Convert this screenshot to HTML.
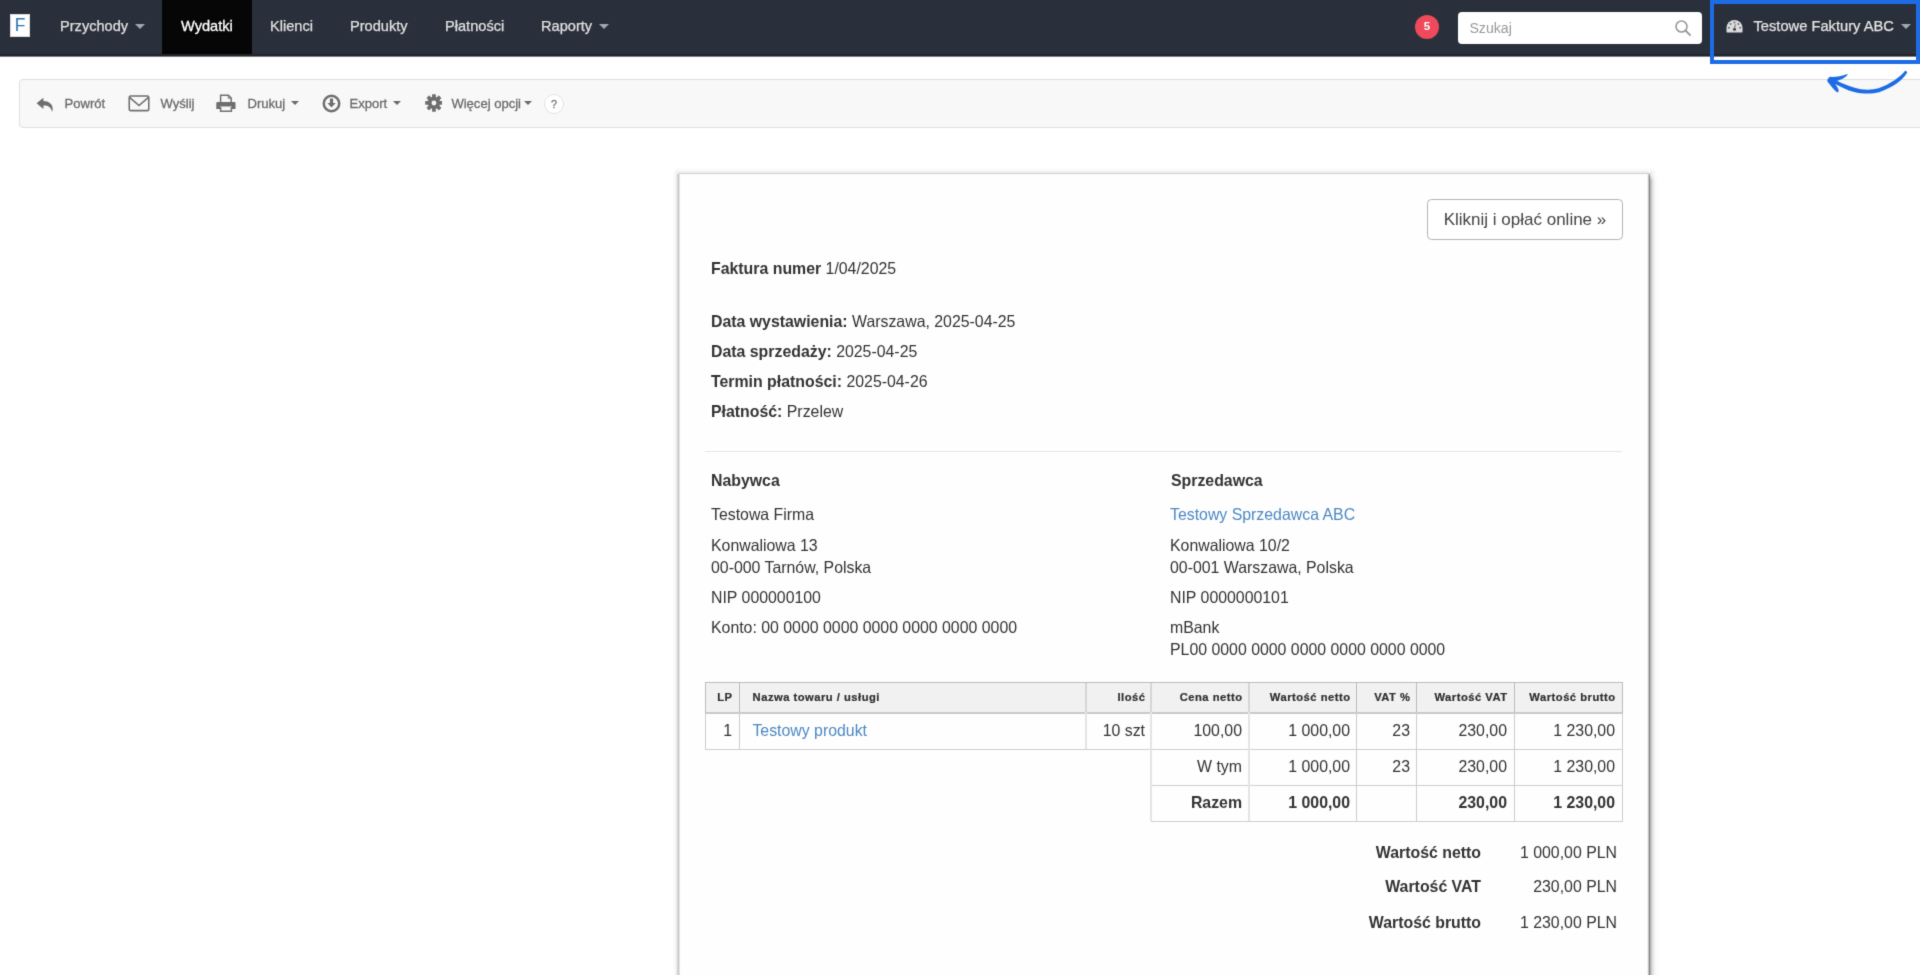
<!DOCTYPE html>
<html lang="pl"><head><meta charset="utf-8"><title>Faktura</title>
<style>
*{box-sizing:border-box;margin:0;padding:0}
html,body{width:1920px;height:975px;overflow:hidden;background:#fff}
body{font-family:"Liberation Sans",sans-serif;color:#333;position:relative;font-size:16px}
#w{position:absolute;left:0;top:0;width:1920px;height:975px;filter:url(#sf)}
.abs{position:absolute;white-space:nowrap}
#nav{left:-6px;top:-6px;width:1932px;height:63px;background:#2a303b;border-bottom:1px solid #7b7e83;box-shadow:inset 0 -2px 0 #212327}
.nv{top:-.4px;height:54px;line-height:52px;color:#e0e0e0;font-size:14.6px;-webkit-text-stroke:.25px #e0e0e0}
.caret{display:inline-block;width:0;height:0;border-left:5px solid transparent;border-right:5px solid transparent;border-top:5px solid #a2a7ae;vertical-align:middle;margin-left:6.8px;margin-top:-1px}
#tb{left:19px;top:79px;width:1920px;height:48.5px;background:#f8f8f8;border:1px solid #dfdfdf;border-radius:4px}
.tbt{top:95.7px;margin-left:.5px;font-size:13.05px;color:#6a6a6a;line-height:15px;-webkit-text-stroke:.3px #6a6a6a}
.tcaret{display:inline-block;width:0;height:0;border-left:4.9px solid transparent;border-right:4.9px solid transparent;border-top:4.9px solid #6a6a6a;vertical-align:middle;margin-left:6px;margin-top:-2px}
#paper{left:678px;top:173px;width:972px;height:830px;background:#fefefe;border:1px solid #d5d5d5;border-left-color:#c8c8c8;border-right-color:#898989}
.t{font-size:15.87px;line-height:18px;color:#333}
.b{font-weight:bold}
a,.lnk{color:#4d88c4;text-decoration:none}
.th{font-size:11.2px;font-weight:bold;color:#2e2e2e;line-height:13px;letter-spacing:.5px;-webkit-text-stroke:.2px #2e2e2e}
.th.r{margin-right:-.5px}
.r{text-align:right}
.vl{width:1px;background:#cdcdcd}
</style></head><body><svg width="0" height="0" style="position:absolute"><filter id="sf" x="0" y="0" width="100%" height="100%" color-interpolation-filters="sRGB"><feConvolveMatrix order="3" kernelMatrix="0.0144 0.0912 0.0144 0.0912 0.5776 0.0912 0.0144 0.0912 0.0144" edgeMode="duplicate" preserveAlpha="false"/></filter></svg><div id="w">
<div id="nav" class="abs"></div>
<div class="abs" style="left:10px;top:14px;width:20px;height:23px;background:#fff;border:1px solid #dcdce6;color:#2d74b8;font-size:17.5px;line-height:21px;text-align:center">F</div>
<div class="abs nv" style="left:60px">Przychody<span class="caret"></span></div>
<div class="abs" style="left:162px;top:-6px;width:90px;height:60px;background:#060606"></div>
<div class="abs nv" style="left:181px;color:#fff;-webkit-text-stroke:.3px #fff">Wydatki</div>
<div class="abs nv" style="left:270px">Klienci</div>
<div class="abs nv" style="left:350px">Produkty</div>
<div class="abs nv" style="left:445px">Płatności</div>
<div class="abs nv" style="left:541px">Raporty<span class="caret"></span></div>

<div class="abs" style="left:1415px;top:15.2px;width:24px;height:24px;border-radius:50%;background:#ee4a5c;color:#fff;font-size:11.5px;font-weight:bold;text-align:center;line-height:23.5px">5</div>
<div class="abs" style="left:1458px;top:12px;width:244px;height:32px;border-radius:4px;background:#fff"></div>
<div class="abs" style="left:1469.4px;top:18.9px;font-size:14.15px;color:#999;line-height:18px">Szukaj</div>
<svg class="abs" style="left:1674px;top:19px" width="18" height="18" viewBox="0 0 18 18"><circle cx="7.5" cy="7.5" r="5.5" fill="none" stroke="#9a9a9a" stroke-width="1.6"/><path d="M11.5 11.5 L16 16" stroke="#9a9a9a" stroke-width="1.8" stroke-linecap="round"/></svg>

<div class="abs nv" style="left:1753.5px;top:0px;color:#e6e6e6;font-size:14.7px">Testowe Faktury ABC<span class="caret" style="margin-left:7px"></span></div>
<svg class="abs" style="left:1726px;top:19px" width="17" height="15" viewBox="0 0 17 15"><path d="M1.2 13.4 Q0.5 13.4 0.5 12.4 V9 A8 8 0 0 1 16.5 9 V12.4 Q16.5 13.4 15.8 13.4 Z" fill="#dcdcdc"/><g fill="#6a6f78"><circle cx="8.5" cy="3.4" r="1"/><circle cx="4.6" cy="5.1" r="1"/><circle cx="12.4" cy="5.1" r="1"/><circle cx="2.9" cy="8.8" r="1"/><circle cx="14.1" cy="8.8" r="1"/></g><circle cx="8.5" cy="10.3" r="1.5" fill="#3a3445"/><path d="M8.3 10 L9.4 5.4" stroke="#6a6470" stroke-width="1"/></svg>
<div class="abs" style="left:1710px;top:-6px;width:216px;height:70px;border:4px solid #1d6ce6;border-top-width:10px;border-right-width:10px;border-bottom-width:4.7px"></div>
<svg class="abs" style="left:1815px;top:62px;z-index:9" width="100" height="40" viewBox="0 0 1920 768"><path fill="#1d6ce6" d="M1745 168 L1772 195 C1700 340 1500 480 1230 580 C1100 615 900 615 750 575 C620 540 480 470 385 420 C420 460 460 520 455 560 L435 585 C380 560 290 440 235 370 C235 330 260 295 300 285 C400 290 520 265 620 228 L628 240 C590 300 500 340 420 362 C520 410 640 460 760 495 C900 540 1080 545 1220 505 C1450 420 1620 300 1722 178 Z"/></svg>

<div id="tb" class="abs"></div>
<svg class="abs" style="left:35.9px;top:97px" width="18.5" height="15.8" viewBox="0 0 18 15"><path d="M7.2 0.6 L0.6 6 L7.2 11.4 L7.2 8 C11.5 7.8 14.6 9.2 15.6 14.4 C17.8 8.2 13.6 3.9 7.2 3.8 Z" fill="#6e6e6e"/></svg>
<svg class="abs" style="left:127.5px;top:95.4px" width="22" height="16.6" viewBox="0 0 22 17"><rect x="1" y="1" width="20" height="15" rx="1.5" fill="none" stroke="#6e6e6e" stroke-width="1.6"/><path d="M1.6 2.6 L11 10.8 L20.4 2.6" fill="none" stroke="#6e6e6e" stroke-width="1.6"/></svg>
<svg class="abs" style="left:216px;top:94px" width="20" height="19" viewBox="0 0 20 19"><path d="M4.6 8.5 V1.2 H12.4 L15.2 4 V8.5" fill="none" stroke="#707070" stroke-width="1.5"/><path d="M12.2 1.4 V4.2 H15" fill="none" stroke="#707070" stroke-width="1"/><path d="M1.6 7.9 H18.2 Q19.5 7.9 19.5 9.2 V15 H16 V12.4 H4 V15 H0.3 V9.2 Q0.3 7.9 1.6 7.9 Z" fill="#6e6e6e"/><path d="M4.6 13 V17.2 H15.4 V13" fill="none" stroke="#707070" stroke-width="1.5"/></svg>
<svg class="abs" style="left:322.2px;top:93.7px" width="19" height="19" viewBox="0 0 19 19"><circle cx="9.5" cy="9.5" r="7.75" fill="none" stroke="#6e6e6e" stroke-width="2.5"/><path d="M7.9 4.6 H11.1 V9 H13.7 L9.5 13.6 L5.3 9 H7.9 Z" fill="#6e6e6e"/></svg>
<svg class="abs" style="left:424.6px;top:94px" width="17.9" height="17.9" viewBox="-9.5 -9.5 19 19"><g fill="#6e6e6e"><circle r="6.6"/><rect x="-2" y="-9.3" width="4" height="18.6" rx=".6"/><rect x="-2" y="-9.3" width="4" height="18.6" rx=".6" transform="rotate(45)"/><rect x="-2" y="-9.3" width="4" height="18.6" rx=".6" transform="rotate(90)"/><rect x="-2" y="-9.3" width="4" height="18.6" rx=".6" transform="rotate(135)"/></g><circle r="2.6" fill="#f7f7f7"/></svg>

<div class="abs tbt" style="left:64px">Powrót</div>
<div class="abs tbt" style="left:160px">Wyślij</div>
<div class="abs tbt" style="left:247px">Drukuj<span class="tcaret"></span></div>
<div class="abs tbt" style="left:349px">Export<span class="tcaret"></span></div>
<div class="abs tbt" style="left:450.9px">Więcej opcji<span class="tcaret" style="margin-left:3.4px"></span></div>
<div class="abs" style="left:544px;top:94.2px;width:20px;height:20px;border-radius:50%;background:#fff;border:1px solid #e2e2e2;color:#777;font-size:10.8px;text-align:center;line-height:19px;-webkit-text-stroke:.3px #777">?</div>

<div id="paper" class="abs"></div>
<div class="abs" style="left:1650px;top:174px;width:8px;height:830px;-webkit-mask-image:linear-gradient(to bottom,rgba(0,0,0,.25),#000 7px);mask-image:linear-gradient(to bottom,rgba(0,0,0,.25),#000 7px);background:linear-gradient(to right,#b2b2b2 0px,#b2b2b2 1px,#cccccc 1px,#cccccc 2px,#dedede 2px,#dedede 3px,#e9e9e9 3px,#e9e9e9 4px,#f2f2f2 4px,#f2f2f2 5px,#f8f8f8 5px,#f8f8f8 6px,#fbfbfb 6px,#fbfbfb 7px,#fdfdfd 7px,#fdfdfd 8px)"></div>
<div class="abs" style="left:673px;top:174px;width:5px;height:830px;background:linear-gradient(to right,#fdfdfd 0px,#fdfdfd 1px,#fafafa 1px,#fafafa 2px,#f5f5f5 2px,#f5f5f5 3px,#ececec 3px,#ececec 4px,#d8d8d8 4px,#d8d8d8 5px)"></div>
<div class="abs" style="left:679px;top:168px;width:970px;height:5px;background:linear-gradient(to bottom,#fdfdfd 0px,#fdfdfd 1px,#fbfbfb 1px,#fbfbfb 2px,#f8f8f8 2px,#f8f8f8 3px,#f2f2f2 3px,#f2f2f2 4px,#ececec 4px,#ececec 5px)"></div>
<div class="abs" style="left:1650px;top:167px;width:8px;height:7px;background:radial-gradient(circle at 0 100%,#e6e6e6 0,#f4f4f4 3px,#fff 7px)"></div>
<div class="abs" style="left:1649px;top:173px;width:1px;height:4px;background:linear-gradient(to bottom,#d2d2d2,#898989)"></div>
<div class="abs" style="left:672px;top:167px;width:7px;height:7px;background:radial-gradient(circle at 100% 100%,#e6e6e6 0,#f4f4f4 3px,#fff 7px)"></div>
<div class="abs" style="left:679px;top:174px;width:1px;height:830px;background:#e4e4e4"></div>
<div class="abs" style="left:1648px;top:174px;width:1px;height:830px;background:#c4c4c4"></div>
<div class="abs" style="left:1647px;top:174px;width:1px;height:830px;background:#f2f2f2"></div>
<div class="abs" style="left:680px;top:174px;width:967px;height:1px;background:#f8f8f8"></div>

<div class="abs" style="left:1427px;top:199px;width:196px;height:41px;border:1px solid #b4b4b4;border-radius:4.5px;background:#fff;font-size:17px;color:#444;text-align:center;line-height:40.2px">Kliknij i opłać online »</div>
<div class="abs t" style="left:711px;top:259.8px"><span class="b">Faktura numer</span> 1/04/2025</div>
<div class="abs t" style="left:711px;top:312.5px"><span class="b">Data wystawienia:</span> Warszawa, 2025-04-25</div>
<div class="abs t" style="left:711px;top:343.3px"><span class="b">Data sprzedaży:</span> 2025-04-25</div>
<div class="abs t" style="left:711px;top:372.5px"><span class="b">Termin płatności:</span> 2025-04-26</div>
<div class="abs t" style="left:711px;top:403.3px"><span class="b">Płatność:</span> Przelew</div>
<div class="abs" style="left:705px;top:451px;width:917px;height:1px;background:#e6e6e6"></div>
<div class="abs t b" style="left:711px;top:472.4px">Nabywca</div>
<div class="abs t" style="left:711px;top:505.8px">Testowa Firma</div>
<div class="abs t" style="left:711px;top:537.1px">Konwaliowa 13</div>
<div class="abs t" style="left:711px;top:559.1px">00-000 Tarnów, Polska</div>
<div class="abs t" style="left:711px;top:589.1px">NIP 000000100</div>
<div class="abs t" style="left:711px;top:619.1px">Konto: 00 0000 0000 0000 0000 0000 0000</div>
<div class="abs t b" style="left:1171px;top:472.4px">Sprzedawca</div>
<div class="abs t lnk" style="left:1170px;top:505.8px">Testowy Sprzedawca ABC</div>
<div class="abs t" style="left:1170px;top:537.1px">Konwaliowa 10/2</div>
<div class="abs t" style="left:1170px;top:559.1px">00-001 Warszawa, Polska</div>
<div class="abs t" style="left:1170px;top:589.1px">NIP 0000000101</div>
<div class="abs t" style="left:1170px;top:619.1px">mBank</div>
<div class="abs t" style="left:1170px;top:641.1px">PL00 0000 0000 0000 0000 0000 0000</div>

<div class="abs" style="left:705px;top:682px;width:918px;height:32px;background:#f1f1f1;border:1px solid #bcbcbc;border-bottom:2px solid #c9c9c9"></div>
<div class="abs" style="left:705px;top:714px;width:918px;height:36px;border:1px solid #cecece;border-top:none"></div>
<div class="abs" style="left:1151px;top:749px;width:472px;height:37px;border:1px solid #cecece;border-top:none;border-left:none"></div>
<div class="abs" style="left:1151px;top:785px;width:472px;height:37px;border:1px solid #cecece;border-left:none"></div>
<div class="abs vl" style="left:739px;top:683px;height:66px"></div>
<div class="abs vl" style="left:1085px;top:683px;height:66px;width:2px;background:#e4e4e4"></div>
<div class="abs vl" style="left:1150px;top:683px;height:138px;width:2px;background:#e4e4e4"></div>
<div class="abs vl" style="left:1248px;top:683px;height:138px;width:2px;background:#e4e4e4"></div>
<div class="abs vl" style="left:1356.3px;top:683px;height:138px"></div>
<div class="abs vl" style="left:1416px;top:683px;height:138px"></div>
<div class="abs vl" style="left:1514px;top:683px;height:138px"></div>

<div class="abs" style="left:739px;top:683px;width:1px;height:29px;background:#bbbbbb"></div>
<div class="abs" style="left:1085px;top:683px;width:2px;height:29px;background:#d6d6d6"></div>
<div class="abs" style="left:1150px;top:683px;width:2px;height:29px;background:#d6d6d6"></div>
<div class="abs" style="left:1248px;top:683px;width:2px;height:29px;background:#d6d6d6"></div>
<div class="abs" style="left:1356.3px;top:683px;width:1px;height:29px;background:#bbbbbb"></div>
<div class="abs" style="left:1416px;top:683px;width:1px;height:29px;background:#bbbbbb"></div>
<div class="abs" style="left:1514px;top:683px;width:1px;height:29px;background:#bbbbbb"></div>
<div class="abs th r" style="right:1188px;top:691px">LP</div>
<div class="abs th" style="left:752.6px;top:691px">Nazwa towaru / usługi</div>
<div class="abs th r" style="right:775px;top:691px">Ilość</div>
<div class="abs th r" style="right:678px;top:691px">Cena netto</div>
<div class="abs th r" style="right:570px;top:691px">Wartość netto</div>
<div class="abs th r" style="right:510px;top:691px">VAT %</div>
<div class="abs th r" style="right:413px;top:691px">Wartość VAT</div>
<div class="abs th r" style="right:305px;top:691px">Wartość brutto</div>

<div class="abs t r" style="right:1188px;top:721.6px">1</div>
<div class="abs t lnk" style="left:752.4px;top:721.6px">Testowy produkt</div>
<div class="abs t r" style="right:775px;top:721.6px">10 szt</div>
<div class="abs t r" style="right:678px;top:721.6px">100,00</div>
<div class="abs t r" style="right:570px;top:721.6px">1 000,00</div>
<div class="abs t r" style="right:510px;top:721.6px">23</div>
<div class="abs t r" style="right:413px;top:721.6px">230,00</div>
<div class="abs t r" style="right:305px;top:721.6px">1 230,00</div>

<div class="abs t r" style="right:678px;top:757.9px">W tym</div>
<div class="abs t r" style="right:570px;top:757.9px">1 000,00</div>
<div class="abs t r" style="right:510px;top:757.9px">23</div>
<div class="abs t r" style="right:413px;top:757.9px">230,00</div>
<div class="abs t r" style="right:305px;top:757.9px">1 230,00</div>

<div class="abs t r b" style="right:678px;top:793.6px">Razem</div>
<div class="abs t r b" style="right:570px;top:793.6px">1 000,00</div>
<div class="abs t r b" style="right:413px;top:793.6px">230,00</div>
<div class="abs t r b" style="right:305px;top:793.6px">1 230,00</div>

<div class="abs t r b" style="right:439px;top:843.9px">Wartość netto</div>
<div class="abs t r" style="right:303px;top:843.9px">1 000,00 PLN</div>
<div class="abs t r b" style="right:439px;top:877.5px">Wartość VAT</div>
<div class="abs t r" style="right:303px;top:877.5px">230,00 PLN</div>
<div class="abs t r b" style="right:439px;top:913.5px">Wartość brutto</div>
<div class="abs t r" style="right:303px;top:913.5px">1 230,00 PLN</div>


</div></body></html>
